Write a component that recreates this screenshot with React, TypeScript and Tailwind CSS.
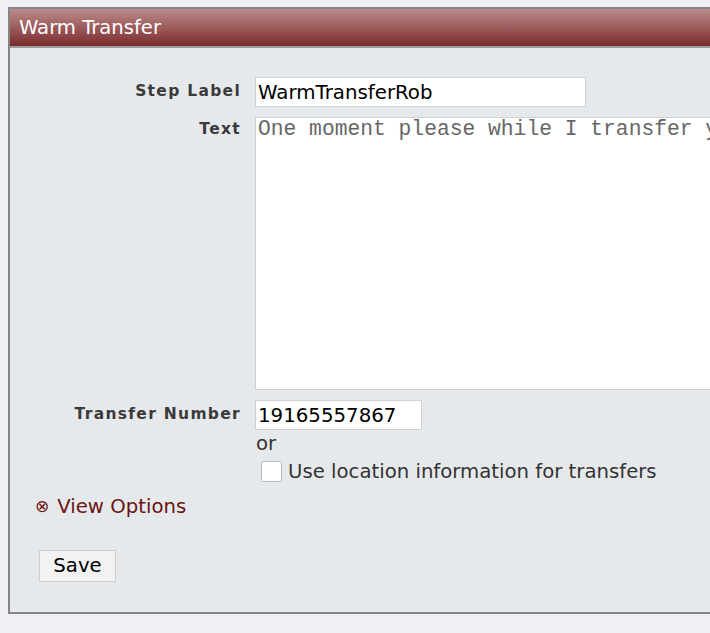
import React, { useState } from 'react';

const App: React.FC = () => {
  const [label, setLabel] = useState('WarmTransferRob');
  const [text, setText] = useState('One moment please while I transfer your call.');
  const [number, setNumber] = useState('19165557867');
  const [useLocation, setUseLocation] = useState(false);

  return (
    <div className="w-[710px] h-[633px] overflow-hidden bg-[#eff0f5] pt-[7px] pl-[8px] font-['DejaVu_Sans',Verdana,sans-serif]">
      {/* Panel */}
      <div className="w-[1100px] h-[607px] border-2 border-[#858585] bg-[#e6e9ec] flex flex-col">
        {/* Header */}
        <div className="h-[39px] bg-gradient-to-b from-[#bb8c8c] to-[#7a2a2e] border-b-2 border-[#9aa0a0] flex items-center pl-[9px]">
          <h1 className="text-[19.6px] text-white leading-none">Warm Transfer</h1>
        </div>

        {/* Form */}
        <div className="flex flex-col pt-[29px]">
          <div className="flex items-center">
            <label className="w-[231px] text-right text-[15.5px] font-bold tracking-[1.3px] text-[#3a3a3a]">Step Label</label>
            <input
              value={label}
              onChange={e => setLabel(e.target.value)}
              className="ml-[14px] w-[331px] h-[30px] bg-white border border-[#cfd2d4] px-[2px] text-[19.8px] text-black outline-none"
            />
          </div>

          <div className="flex items-start mt-[10px]">
            <label className="w-[231px] text-right text-[15.5px] font-bold tracking-[1.3px] text-[#3a3a3a] pt-[1px]">Text</label>
            <textarea
              value={text}
              onChange={e => setText(e.target.value)}
              className="ml-[14px] w-[800px] h-[273px] bg-white border border-[#cfd2d4] px-[2px] py-0 text-[21.3px] leading-[22px] text-[#666] font-['Liberation_Mono','Courier_New',monospace] resize-none outline-none"
            />
          </div>

          <div className="flex items-center mt-[10px]">
            <label className="w-[231px] text-right text-[15.5px] font-bold tracking-[1.3px] text-[#3a3a3a]">Transfer Number</label>
            <input
              value={number}
              onChange={e => setNumber(e.target.value)}
              className="ml-[14px] w-[167px] h-[30px] bg-white border border-[#cfd2d4] px-[2px] text-[19.8px] text-black outline-none"
            />
          </div>

          <div className="pl-[246px] text-[19.7px] text-[#333] leading-[24px] mt-[2px]">or</div>

          <label className="pl-[251px] flex items-center mt-[1px] text-[19.7px] text-[#333]">
            <input
              type="checkbox"
              checked={useLocation}
              onChange={e => setUseLocation(e.target.checked)}
              className="appearance-none w-[21px] h-[21px] bg-white border border-[#b9bcbf] rounded-[2px]"
            />
            <span className="ml-[6px]">Use location information for transfers</span>
          </label>

          <div className="flex items-center pl-[25px] mt-[5px] text-[#6b1414]">
            <span className="text-[17px] leading-none">⊗</span>
            <span className="ml-[8px] text-[19.7px]">View Options</span>
          </div>

          <div className="pl-[29px] mt-[29px]">
            <button className="h-[32px] w-[77px] bg-[#f2f2f2] border border-[#cdcdcd] text-[19.7px] text-black">Save</button>
          </div>
        </div>
      </div>
    </div>
  );
};

export default App;
